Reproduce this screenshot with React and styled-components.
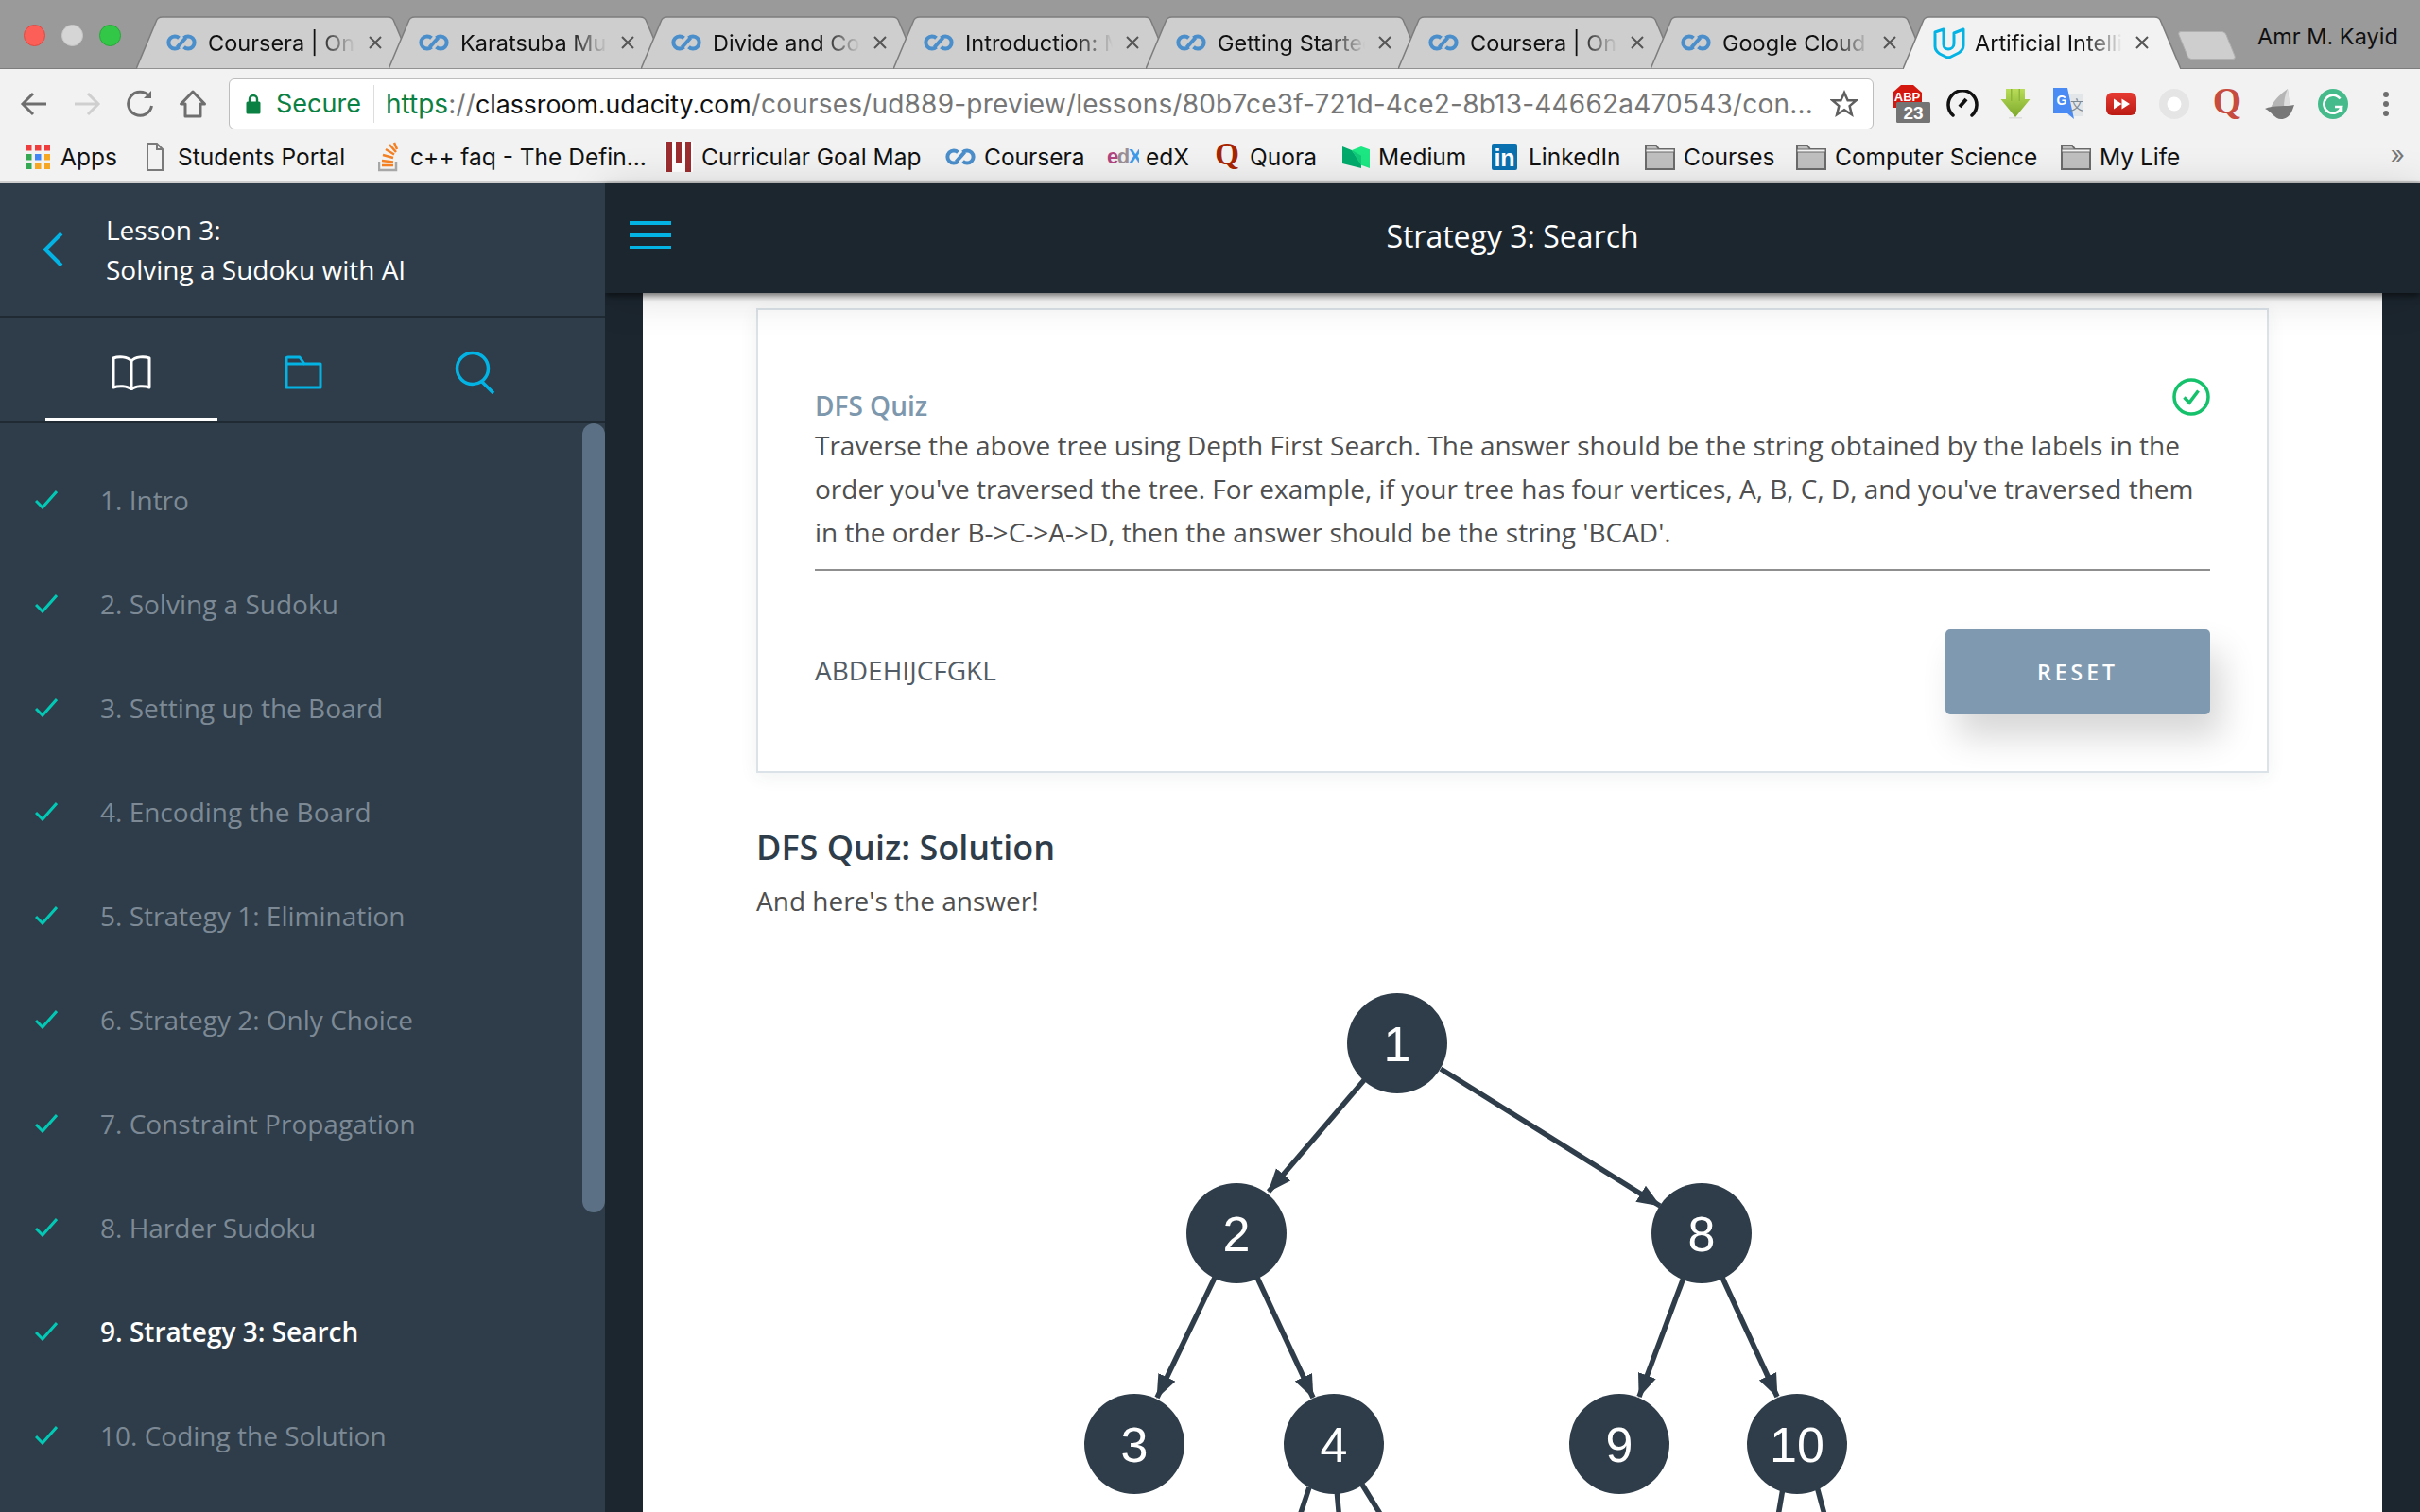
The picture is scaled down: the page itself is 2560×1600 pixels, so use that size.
import styled, { createGlobalStyle } from "styled-components";

const GlobalStyle = createGlobalStyle`
  html, body { margin: 0; padding: 0; background: #1c262f; }
  * { box-sizing: border-box; }
`;

const chromeFont = `Inter, Roboto, "Liberation Sans", sans-serif`;
const pageFont = `"Open Sans", "Noto Sans", sans-serif`;

const Page = styled.div`
  width: 2560px;
  height: 1600px;
  overflow: hidden;
  display: flex;
  flex-direction: column;
`;

/* browser chrome */
const TabStrip = styled.div`
  height: 73px;
  flex: none;
  background: #9a9a9a;
  border-bottom: 1px solid #7d7d7d;
  padding: 17px 0 0 144px;
  display: flex;
  position: relative;
`;

const WindowDots = styled.div`
  position: absolute;
  left: 25px;
  top: 26px;
  display: flex;
  gap: 17px;
`;

const Dot = styled.span`
  width: 23px;
  height: 23px;
  border-radius: 50%;
  background: ${(p) => p.$color};
  border: 1px solid ${(p) => p.$edge};
`;

const Tab = styled.div`
  width: 294px;
  height: 56px;
  flex: none;
  margin-right: -27px;
  position: relative;
  display: flex;
  align-items: center;
  padding-left: 32px;
  z-index: ${(p) => (p.$active ? 2 : 1)};
  font: 400 23.5px ${chromeFont};
  color: #111;
`;

const TabShape = styled.svg`
  position: absolute;
  left: 0;
  top: 0;
  z-index: -1;
`;

const TabTitle = styled.span`
  width: 156px;
  margin-left: ${(p) => (p.$active ? 10 : 12)}px;
  white-space: nowrap;
  overflow: hidden;
  -webkit-mask-image: linear-gradient(to right, #000 74%, transparent 100%);
  mask-image: linear-gradient(to right, #000 74%, transparent 100%);
`;

const TabClose = styled.svg`
  margin-left: 13px;
  flex: none;
`;

const NewTab = styled.div`
  width: 51px;
  height: 30px;
  flex: none;
  margin: 16px 0 0 29px;
  background: #cecece;
  border: 1px solid #b0b0b0;
  border-radius: 4px;
  transform: skewX(22deg);
`;

const Profile = styled.div`
  position: absolute;
  left: 2388px;
  top: 24px;
  font: 400 23.5px ${chromeFont};
  color: #111;
`;

const Toolbar = styled.div`
  height: 73px;
  flex: none;
  background: #f2f2f2;
  display: flex;
  align-items: center;
  padding-left: 8px;
`;

const Slot = styled.div`
  width: ${(p) => p.$w || 56}px;
  height: 56px;
  flex: none;
  display: flex;
  align-items: center;
  justify-content: center;
`;

const Omnibox = styled.div`
  width: 1740px;
  height: 54px;
  flex: none;
  margin: 0 14px 0 10px;
  background: #fff;
  border: 1px solid #bdbdbd;
  border-radius: 6px;
  display: flex;
  align-items: center;
  padding-left: 17px;
  font: 400 28px ${chromeFont};
  white-space: nowrap;
`;

const Secure = styled.span`
  color: #0b8043;
  font-size: 27px;
  margin-left: 16px;
  width: 103px;
  flex: none;
`;

const OmniDivider = styled.span`
  width: 1px;
  height: 40px;
  background: #ddd;
  flex: none;
`;

const Url = styled.span`
  margin-left: 12px;
  width: 1512px;
  flex: none;
  color: #767676;
  letter-spacing: 0.2px;
  overflow: hidden;
  b { font-weight: 400; color: #0b8043; letter-spacing: 0; }
  i { font-style: normal; font-size: 26.7px; color: #111; letter-spacing: 0; }
`;

const StarIcon = styled.svg`
  margin-left: 16px;
  flex: none;
`;

const BookmarksBar = styled.div`
  height: 48px;
  flex: none;
  background: #f2f2f2;
  border-bottom: 2px solid #cfcfcf;
  padding: 0 0 6px 27px;
  display: flex;
  align-items: center;
  position: relative;
  font: 400 24.5px ${chromeFont};
  color: #111;
`;

const Bookmark = styled.div`
  width: ${(p) => p.$w}px;
  flex: none;
  display: flex;
  align-items: center;
  gap: ${(p) => p.$gap || 9}px;
  white-space: nowrap;
`;

const More = styled.span`
  position: absolute;
  right: 16px;
  top: 2px;
  color: #777;
  font-size: 26px;
`;

/* classroom */
const Classroom = styled.div`
  flex: 1;
  min-height: 0;
  display: flex;
  font-family: ${pageFont};
`;

const Sidebar = styled.aside`
  width: 640px;
  flex: none;
  background: #2e3d49;
  position: relative;
  z-index: 3;
  overflow: hidden;
`;

const LessonHeader = styled.div`
  height: 142px;
  border-bottom: 2px solid #1f2a33;
  display: flex;
  align-items: center;
  padding-left: 44px;
`;

const LessonTitle = styled.div`
  margin-left: 44px;
  color: #fff;
  font-size: 28px;
  line-height: 42px;
`;

const SideTabs = styled.div`
  height: 112px;
  border-bottom: 2px solid #1f2a33;
  display: flex;
  padding-left: 48px;
`;

const SideTab = styled.div`
  width: 182px;
  height: 110px;
  display: flex;
  align-items: center;
  justify-content: center;
  padding-top: 9px;
  border-bottom: 4px solid ${(p) => (p.$active ? "#fff" : "transparent")};
`;

const LessonList = styled.ul`
  list-style: none;
  margin: 0;
  padding: 26px 0 0 37px;
`;

const LessonItem = styled.li`
  height: 110px;
  display: flex;
  align-items: center;
  gap: 45px;
  font-size: 28px;
  color: ${(p) => (p.$active ? "#fff" : "#7d8a96")};
  font-weight: ${(p) => (p.$active ? 600 : 400)};
`;

const ScrollThumb = styled.div`
  position: absolute;
  right: 0;
  top: 254px;
  width: 24px;
  height: 835px;
  background: #5c7085;
  border-radius: 12px;
`;

const MainColumn = styled.main`
  flex: 1;
  min-width: 0;
  display: flex;
  flex-direction: column;
  background: #1c262f;
`;

const TopBar = styled.header`
  height: 116px;
  flex: none;
  background: #1c262f;
  position: relative;
  z-index: 2;
  display: flex;
  align-items: center;
  justify-content: center;
  padding-bottom: 5px;
  color: #fff;
  font-size: 32px;
  box-shadow: 0 3px 7px rgba(0, 0, 0, 0.55), 0 4px 46px rgba(0, 0, 0, 0.14);
`;

const Hamburger = styled.svg`
  position: absolute;
  left: 26px;
  top: 40px;
`;

const Content = styled.div`
  flex: 1;
  min-height: 0;
  margin: 0 40px;
  background: #fff;
  padding: 16px 120px 0;
`;

const QuizCard = styled.section`
  height: 492px;
  border: 2px solid #dbe2e8;
  box-shadow: 0 4px 18px rgba(46, 61, 73, 0.07);
  padding: 0 60px;
  position: relative;
`;

const QuizLabel = styled.h3`
  margin: 82px 0 0;
  font-size: 28px;
  line-height: 38px;
  font-weight: 600;
  color: #7d97ad;
`;

const DoneIcon = styled.svg`
  position: absolute;
  right: 60px;
  top: 72px;
`;

const QuizText = styled.p`
  margin: 0;
  padding-bottom: 16px;
  font-size: 28px;
  line-height: 46px;
  color: #4f4f4f;
  border-bottom: 2px solid #8f8f8f;
`;

const AnswerRow = styled.div`
  margin-top: 62px;
  display: flex;
  align-items: center;
  justify-content: space-between;
`;

const AnswerText = styled.span`
  font-size: 28px;
  padding-bottom: 4px;
  color: #525c65;
`;

const ResetButton = styled.button`
  width: 280px;
  height: 90px;
  border: 0;
  border-radius: 5px;
  background: #7f9ab0;
  color: #fff;
  font: 600 23px ${pageFont};
  letter-spacing: 4px;
  box-shadow: 12px 24px 36px rgba(0, 0, 0, 0.16);
`;

const SectionTitle = styled.h2`
  margin: 54px 0 0;
  font-size: 36px;
  line-height: 50px;
  font-weight: 600;
  color: #2e3d49;
`;

const SectionText = styled.p`
  margin: 8px 0 0;
  font-size: 28px;
  line-height: 46px;
  color: #4f4f4f;
`;

const TreeFigure = styled.svg`
  display: block;
  margin-top: 64px;
`;

const CourseraIcon = ({ size = 32 }) => (
  <svg width={size} height={size / 2 + 2} viewBox="0 0 32 18" fill="none" stroke="#4a8ecb" strokeWidth="4" style={{ flex: "none" }}>
    <path d="M13.5 4.2A6.6 6.6 0 1 0 13.5 13.8" />
    <path d="M18.5 4.2A6.6 6.6 0 1 1 18.5 13.8" />
    <path d="M11.5 14L20.5 4" />
  </svg>
);

const UdacityIcon = () => (
  <svg width="34" height="34" viewBox="0 0 34 34" fill="none" stroke="#02b3e4" strokeWidth="3" style={{ flex: "none" }}>
    <path d="M2 6L11 3V19C11 22 13 24 16 24C19 24 22 22 22 18V7L32 3V20C32 24 30 26 27 28L19 32C17 33 15 33 13 32L7 29C4 27 2 25 2 21Z" strokeLinejoin="round" />
  </svg>
);

const tabs = [
  "Coursera | Online Courses",
  "Karatsuba Multiplication",
  "Divide and Conquer",
  "Introduction: Master",
  "Getting Started",
  "Coursera | Online Courses",
  "Google Cloud Platform",
  "Artificial Intelligence",
];

const ChromeTab = ({ title, active }) => (
  <Tab $active={active}>
    <TabShape width="294" height="56" viewBox="0 0 294 56">
      <path
        d={`M0 56L21 6C22 2 24 1 28 1H266C270 1 272 2 273 6L294 56${active ? "" : "Z"}`}
        fill={active ? "#f2f2f2" : "#cecece"}
        stroke="#7d7d7d"
        strokeWidth="1.5"
      />
    </TabShape>
    {active ? <UdacityIcon /> : <CourseraIcon />}
    <TabTitle $active={active}>{title}</TabTitle>
    <TabClose width="16" height="16" viewBox="0 0 16 16" stroke="#555" strokeWidth="2">
      <path d="M2 2L14 14M14 2L2 14" />
    </TabClose>
  </Tab>
);

const BackIcon = () => (
  <svg width="30" height="30" viewBox="0 0 30 30" fill="none" stroke="#6e6e6e" strokeWidth="3">
    <path d="M28 15H4M14 4L3 15L14 26" />
  </svg>
);

const ForwardIcon = () => (
  <svg width="30" height="30" viewBox="0 0 30 30" fill="none" stroke="#cfcfcf" strokeWidth="3">
    <path d="M2 15H26M16 4L27 15L16 26" />
  </svg>
);

const ReloadIcon = () => (
  <svg width="30" height="32" viewBox="0 0 30 32" fill="none" stroke="#6e6e6e" strokeWidth="3">
    <path d="M25 8A12.500 12.500 0 1 0 27.500 18" />
    <path d="M27 2V10H19Z" fill="#6e6e6e" stroke="none" />
  </svg>
);

const HomeIcon = () => (
  <svg width="30" height="32" viewBox="0 0 30 32" fill="none" stroke="#6e6e6e" strokeWidth="3">
    <path d="M15 3L2.500 16H7V29H23V16H27.500Z" strokeLinejoin="round" />
  </svg>
);

const LockIcon = () => (
  <svg width="16" height="22" viewBox="0 0 16 22" style={{ flex: "none" }}>
    <path d="M4 9V6A4 4 0 0 1 12 6V9" fill="none" stroke="#0b8043" strokeWidth="2.400" />
    <rect x="0.500" y="8.500" width="15" height="13" rx="1.500" fill="#0b8043" />
  </svg>
);

const AbpIcon = () => (
  <svg width="40" height="40" viewBox="0 0 40 40">
    <path d="M9 0H22L31 8V24H0V8Z" fill="#d4170f" />
    <text x="15.500" y="17" fontSize="13" fontWeight="700" fontFamily="Liberation Sans" fill="#fff" textAnchor="middle">ABP</text>
    <rect x="4" y="18" width="36" height="22" rx="1.500" fill="#747474" />
    <text x="22" y="36" fontSize="19" fontWeight="700" fontFamily="Liberation Sans" fill="#fff" textAnchor="middle">23</text>
  </svg>
);

const GaugeIcon = () => (
  <svg width="34" height="30" viewBox="0 0 34 30" fill="none" stroke="#111" strokeWidth="3.500">
    <path d="M7 27A15 15 0 1 1 27 27" strokeLinecap="round" />
    <path d="M14 18L21 10" strokeWidth="4" />
  </svg>
);

const SaveIcon = () => (
  <svg width="32" height="32" viewBox="0 0 32 32">
    <defs>
      <linearGradient id="saveGreen" x1="0" y1="0" x2="0" y2="1">
        <stop offset="0" stopColor="#b9dd5a" />
        <stop offset="1" stopColor="#7da82a" />
      </linearGradient>
    </defs>
    <path d="M6 0H26V11H31.500L16 30L0.500 11H6Z" fill="url(#saveGreen)" />
    <path d="M11 0H12.500V13H11ZM19.500 0H21V13H19.500Z" fill="#8eb73a" />
    <path d="M9 30H23V31.500H9Z" fill="#ddd" />
  </svg>
);

const TranslateIcon = () => (
  <svg width="32" height="33" viewBox="0 0 32 33">
    <rect x="16" y="6" width="16" height="24" fill="#e3e6e8" />
    <path d="M0 0H15L22 33L15 27H0Z" fill="#4a8af4" />
    <text x="9" y="18" fontSize="14" fontWeight="700" fontFamily="Liberation Sans" fill="#fff" textAnchor="middle">G</text>
    <text x="25" y="23" fontSize="14" fontFamily="Noto Sans CJK SC" fill="#7d8a96" textAnchor="middle">文</text>
  </svg>
);

const FastForwardIcon = () => (
  <svg width="32" height="24" viewBox="0 0 32 24">
    <defs>
      <linearGradient id="ytRed" x1="0" y1="0" x2="0" y2="1">
        <stop offset="0" stopColor="#e63b33" />
        <stop offset="1" stopColor="#bb1b14" />
      </linearGradient>
    </defs>
    <rect width="32" height="24" rx="6" fill="url(#ytRed)" />
    <path d="M8 6.500L16.500 12L8 17.500ZM16.500 6.500L25 12L16.500 17.500Z" fill="#fff" />
  </svg>
);

const RingIcon = () => (
  <svg width="32" height="32" viewBox="0 0 32 32">
    <circle cx="16" cy="16" r="16" fill="#e5e5e5" />
    <circle cx="16" cy="16" r="7.500" fill="#fff" />
  </svg>
);

const QuoraIcon = () => (
  <svg width="32" height="38" viewBox="0 0 32 38">
    <text x="16" y="29" fontSize="39" fontWeight="700" fontFamily="Liberation Serif" fill="#c74b3e" textAnchor="middle">Q</text>
  </svg>
);

const ShipIcon = () => (
  <svg width="32" height="34" viewBox="0 0 32 34">
    <path d="M24 1C25 8 26 15 25 21L6 21C10 12 17 6 24 1Z" fill="#b5b5b5" />
    <path d="M24 1C25 8 26 15 25 21L20 21C20 14 21 7 24 1Z" fill="#dedede" />
    <path d="M0 22C8 18 24 20 31 18C29 23 27 33 17 33C10 33 7 25 0 22Z" fill="#777" />
  </svg>
);

const GrammarlyIcon = () => (
  <svg width="32" height="32" viewBox="0 0 32 32">
    <circle cx="16" cy="16" r="16" fill="#45bb8b" />
    <path d="M23.500 10.500A9.500 9.500 0 1 0 25 19H18M25 19V25" fill="none" stroke="#fff" strokeWidth="2.600" />
  </svg>
);

const DotsIcon = () => (
  <svg width="8" height="28" viewBox="0 0 8 28" fill="#6e6e6e">
    <circle cx="4" cy="4" r="3" />
    <circle cx="4" cy="14" r="3" />
    <circle cx="4" cy="24" r="3" />
  </svg>
);

const AppsIcon = () => (
  <svg width="26" height="26" viewBox="0 0 26 26" style={{ flex: "none" }}>
    {["#ef3d3d", "#ef3d3d", "#ef3d3d", "#34a853", "#4285f4", "#f5a623", "#34a853", "#f5a623", "#f5a623"].map((c, i) => (
      <rect key={i} x={(i % 3) * 10} y={Math.floor(i / 3) * 10} width="6.500" height="6.500" fill={c} />
    ))}
  </svg>
);

const DocIcon = () => (
  <svg width="18" height="30" viewBox="0 0 18 30" fill="none" stroke="#7a7a7a" strokeWidth="2" style={{ flex: "none" }}>
    <path d="M1 1H11L17 7V29H1ZM11 1V7H17" />
  </svg>
);

const StackIcon = () => (
  <svg width="22" height="32" viewBox="0 0 22 32" fill="none" style={{ flex: "none" }}>
    <path d="M1 21V30H19V21" stroke="#a7a7a7" strokeWidth="2.500" />
    <path d="M4 25H16M4 20L16 21.500M5 14L16 17M8 8L17 13.500M12 3L19 11M17 1L20 8" stroke="#f48024" strokeWidth="2.500" />
  </svg>
);

const GoalIcon = () => (
  <svg width="29" height="32" viewBox="0 0 29 32" fill="#9b2d30" style={{ flex: "none" }}>
    <rect width="29" height="32" fill="#fff" />
    <rect x="1" y="0" width="6" height="32" />
    <rect x="11" y="0" width="6" height="22" />
    <rect x="21" y="0" width="6" height="32" />
  </svg>
);

const EdxIcon = () => (
  <svg width="34" height="24" viewBox="0 0 34 24" style={{ flex: "none" }}>
    <text x="0" y="19" fontSize="22" fontWeight="700" fontFamily="Liberation Sans" letterSpacing="-1.500">
      <tspan fill="#b2457f">e</tspan>
      <tspan fill="#9a8f96">d</tspan>
      <tspan fill="#3e9bea">X</tspan>
    </text>
  </svg>
);

const QuoraMark = () => (
  <svg width="26" height="32" viewBox="0 0 26 32" style={{ flex: "none" }}>
    <text x="13" y="24" fontSize="33" fontWeight="700" fontFamily="Liberation Serif" fill="#a82400" textAnchor="middle">Q</text>
  </svg>
);

const MediumIcon = () => (
  <svg width="29" height="23" viewBox="0 0 29 28" preserveAspectRatio="none" style={{ flex: "none" }}>
    <path d="M0 0L10 5L20 22V28L0 22Z" fill="#00ab6c" />
    <path d="M10 5L20 0L29 4V28L20 24Z" fill="#1ce783" />
    <path d="M10 5L20 24V12Z" fill="#12c979" />
  </svg>
);

const LinkedInIcon = () => (
  <svg width="27" height="28" viewBox="0 0 27 28" style={{ flex: "none" }}>
    <rect width="27" height="28" rx="2" fill="#0a71b0" />
    <text x="13.500" y="24" fontSize="25" fontWeight="700" fontFamily="Liberation Sans" fill="#fff" textAnchor="middle">in</text>
  </svg>
);

const FolderIcon = () => (
  <svg width="32" height="28" viewBox="0 0 32 28" style={{ flex: "none" }}>
    <path d="M1 27V2H12L15 6H31V27Z" fill="#c0c0c0" stroke="#6b6b6b" strokeWidth="2" />
    <path d="M1 6H31V9H1Z" fill="#f3f3f3" stroke="#6b6b6b" strokeWidth="1" />
  </svg>
);

const bookmarks = [
  { label: "Apps", w: 128, icon: <AppsIcon />, gap: 11 },
  { label: "Students Portal", w: 245, icon: <DocIcon />, gap: 15 },
  { label: "c++ faq - The Defin...", w: 304, icon: <StackIcon />, gap: 12 },
  { label: "Curricular Goal Map", w: 296, icon: <GoalIcon /> },
  { label: "Coursera", w: 171, icon: <CourseraIcon /> },
  { label: "edX", w: 114, icon: <EdxIcon />, gap: 7 },
  { label: "Quora", w: 135, icon: <QuoraMark />, gap: 11 },
  { label: "Medium", w: 158, icon: <MediumIcon /> },
  { label: "LinkedIn", w: 162, icon: <LinkedInIcon />, gap: 12 },
  { label: "Courses", w: 160, icon: <FolderIcon /> },
  { label: "Computer Science", w: 280, icon: <FolderIcon /> },
  { label: "My Life", w: 120, icon: <FolderIcon /> },
];

const lessons = [
  "1. Intro",
  "2. Solving a Sudoku",
  "3. Setting up the Board",
  "4. Encoding the Board",
  "5. Strategy 1: Elimination",
  "6. Strategy 2: Only Choice",
  "7. Constraint Propagation",
  "8. Harder Sudoku",
  "9. Strategy 3: Search",
  "10. Coding the Solution",
];

const CheckMark = () => (
  <svg width="24" height="20" viewBox="0 0 24 20" fill="none" stroke="#02c9b5" strokeWidth="3" style={{ flex: "none" }}>
    <path d="M1 11L8 18L23 1" />
  </svg>
);

const nodes = [
  [1478, 1104, "1"],
  [1308, 1305, "2"],
  [1800, 1305, "8"],
  [1200, 1528, "3"],
  [1411, 1528, "4"],
  [1713, 1528, "9"],
  [1901, 1528, "10"],
];

const arrows = [
  [1443, 1143, 1342, 1261],
  [1524, 1131, 1756, 1276],
  [1285, 1352, 1224, 1479],
  [1330, 1352, 1389, 1479],
  [1781, 1352, 1734, 1478],
  [1822, 1352, 1880, 1478],
];

const stubs = [
  [1385, 1574, 1373, 1610],
  [1414, 1576, 1417, 1610],
  [1441, 1571, 1465, 1610],
  [1886, 1575, 1880, 1610],
  [1922, 1573, 1932, 1610],
];

const Tree = () => (
  <TreeFigure width="1600" height="600" viewBox="800 1040 1600 600">
    <defs>
      <marker id="head" markerWidth="26" markerHeight="22" refX="24" refY="11" orient="auto" markerUnits="userSpaceOnUse">
        <path d="M0 1L25 11L0 21Z" fill="#2e3d49" />
      </marker>
    </defs>
    {arrows.map(([x1, y1, x2, y2], i) => (
      <line key={i} x1={x1} y1={y1} x2={x2} y2={y2} stroke="#2e3d49" strokeWidth="5.500" markerEnd="url(#head)" />
    ))}
    {stubs.map(([x1, y1, x2, y2], i) => (
      <line key={i} x1={x1} y1={y1} x2={x2} y2={y2} stroke="#2e3d49" strokeWidth="5.500" />
    ))}
    {nodes.map(([cx, cy, label]) => (
      <g key={label}>
        <circle cx={cx} cy={cy} r="53" fill="#2e3d49" />
        <text x={cx} y={cy + 19} fontSize="52" fontFamily="Liberation Sans" fill="#fff" textAnchor="middle">{label}</text>
      </g>
    ))}
  </TreeFigure>
);

const App = () => (
  <Page>
    <GlobalStyle />
    <TabStrip>
      <WindowDots>
        <Dot $color="#fc5f57" $edge="#df4a42" />
        <Dot $color="#d5d5d5" $edge="#c6c6c6" />
        <Dot $color="#33c748" $edge="#27a83a" />
      </WindowDots>
      {tabs.map((t, i) => (
        <ChromeTab key={i} title={t} active={i === tabs.length - 1} />
      ))}
      <NewTab />
      <Profile>Amr M. Kayid</Profile>
    </TabStrip>

    <Toolbar>
      <Slot><BackIcon /></Slot>
      <Slot><ForwardIcon /></Slot>
      <Slot><ReloadIcon /></Slot>
      <Slot><HomeIcon /></Slot>
      <Omnibox>
        <LockIcon />
        <Secure>Secure</Secure>
        <OmniDivider />
        <Url>
          <b>https</b>://<i>classroom.udacity.com</i>/courses/ud889-preview/lessons/80b7ce3f-721d-4ce2-8b13-44662a470543/con...
        </Url>
        <StarIcon width="30" height="30" viewBox="0 0 24 24" fill="none" stroke="#5f5f5f" strokeWidth="2">
          <path d="M12 2.500L14.900 9H22L16.500 13.700L18.300 21L12 17L5.700 21L7.500 13.700L2 9H9.100Z" />
        </StarIcon>
      </Omnibox>
      <Slot $w={52}><AbpIcon /></Slot>
      <Slot><GaugeIcon /></Slot>
      <Slot><SaveIcon /></Slot>
      <Slot><TranslateIcon /></Slot>
      <Slot><FastForwardIcon /></Slot>
      <Slot><RingIcon /></Slot>
      <Slot><QuoraIcon /></Slot>
      <Slot><ShipIcon /></Slot>
      <Slot><GrammarlyIcon /></Slot>
      <Slot><DotsIcon /></Slot>
    </Toolbar>

    <BookmarksBar>
      {bookmarks.map((b) => (
        <Bookmark key={b.label} $w={b.w} $gap={b.gap}>
          {b.icon}
          <span>{b.label}</span>
        </Bookmark>
      ))}
      <More>»</More>
    </BookmarksBar>

    <Classroom>
      <Sidebar>
        <LessonHeader>
          <svg width="24" height="38" viewBox="0 0 24 38" fill="none" stroke="#02b3e4" strokeWidth="4">
            <path d="M21 2L4 19L21 36" />
          </svg>
          <LessonTitle>
            Lesson 3:
            <br />
            Solving a Sudoku with AI
          </LessonTitle>
        </LessonHeader>
        <SideTabs>
          <SideTab $active>
            <svg width="44" height="38" viewBox="0 0 44 38" fill="none" stroke="#fff" strokeWidth="3">
              <path d="M22 7C18 2 8 2 3 4V35C8 33 18 33 22 37C26 33 36 33 41 35V4C36 2 26 2 22 7V37" strokeLinejoin="round" />
            </svg>
          </SideTab>
          <SideTab>
            <svg width="40" height="36" viewBox="0 0 40 36" fill="none" stroke="#02b3e4" strokeWidth="3">
              <path d="M2 34V3C2 2 3 2 4 2H16L21 9H38V34Z" strokeLinejoin="round" />
              <path d="M2 9H21" />
            </svg>
          </SideTab>
          <SideTab>
            <svg width="44" height="46" viewBox="0 0 44 46" fill="none" stroke="#02b3e4" strokeWidth="3.500">
              <circle cx="19" cy="19" r="16.500" />
              <path d="M29 33L41 45" />
            </svg>
          </SideTab>
        </SideTabs>
        <LessonList>
          {lessons.map((l) => (
            <LessonItem key={l} $active={l.startsWith("9.")}>
              <CheckMark />
              <span>{l}</span>
            </LessonItem>
          ))}
        </LessonList>
        <ScrollThumb />
      </Sidebar>

      <MainColumn>
        <TopBar>
          <Hamburger width="44" height="30" viewBox="0 0 44 30" fill="#02b3e4">
            <rect width="44" height="4" />
            <rect y="13" width="44" height="4" />
            <rect y="26" width="44" height="4" />
          </Hamburger>
          Strategy 3: Search
        </TopBar>
        <Content>
          <QuizCard>
            <QuizLabel>DFS Quiz</QuizLabel>
            <DoneIcon width="40" height="40" viewBox="0 0 40 40" fill="none" stroke="#15c26b" strokeWidth="3.500">
              <circle cx="20" cy="20" r="18" />
              <path d="M12.500 20.500L18 26L27.500 13.500" />
            </DoneIcon>
            <QuizText>
              Traverse the above tree using Depth First Search. The answer should be the string obtained by the labels in the order you've traversed the tree. For example, if your tree has four vertices, A, B, C, D, and you've traversed them in the order B-&gt;C-&gt;A-&gt;D, then the answer should be the string 'BCAD'.
            </QuizText>
            <AnswerRow>
              <AnswerText>ABDEHIJCFGKL</AnswerText>
              <ResetButton>RESET</ResetButton>
            </AnswerRow>
          </QuizCard>
          <SectionTitle>DFS Quiz: Solution</SectionTitle>
          <SectionText>And here's the answer!</SectionText>
          <Tree />
        </Content>
      </MainColumn>
    </Classroom>
  </Page>
);

export default App;
